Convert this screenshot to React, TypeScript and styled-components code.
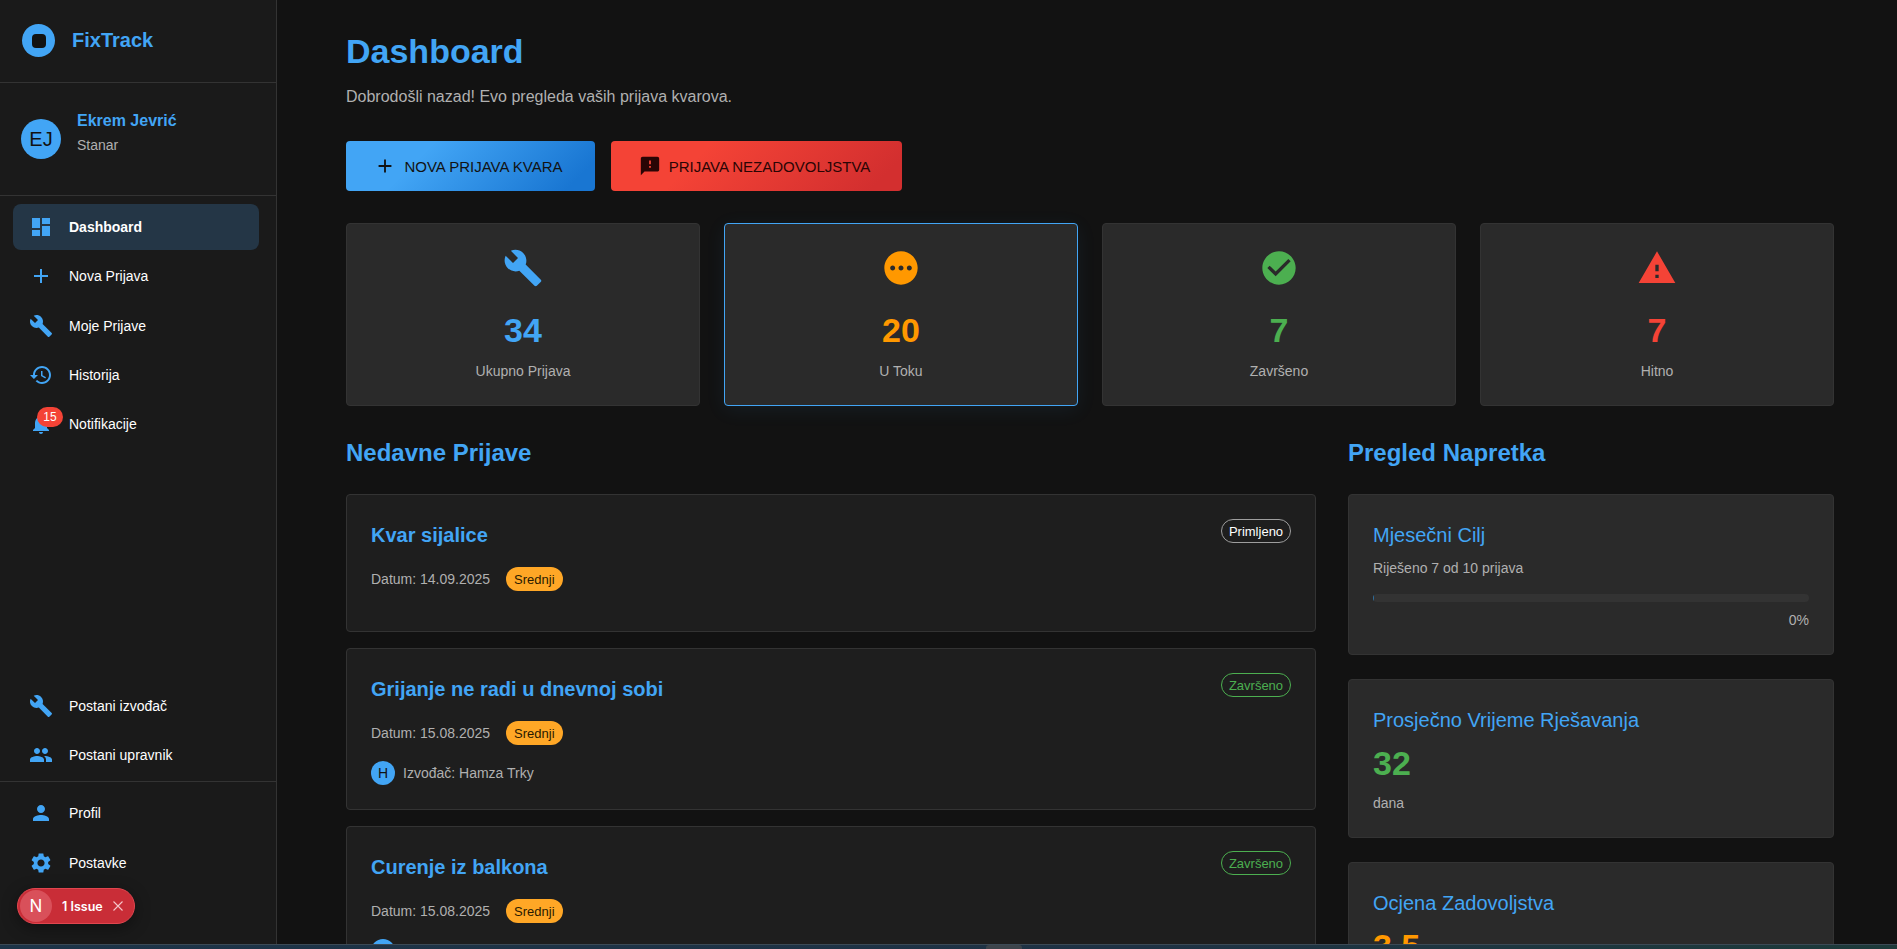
import React, { FC } from 'react';
import styled, { createGlobalStyle } from 'styled-components';

const GlobalStyle = createGlobalStyle`
    html, body {
        margin: 0;
        height: 100%;
        overflow: hidden;
        background: #121212;
        font-family: "Liberation Sans", Arial, sans-serif;
    }
    * {
        box-sizing: border-box;
    }
`;

const paths = {
    dashboard: 'M3 13h8V3H3v10zm0 8h8v-6H3v6zm10 0h8V11h-8v10zm0-18v6h8V3h-8z',
    add: 'M19 13h-6v6h-2v-6H5v-2h6V5h2v6h6v2z',
    build: 'M22.7 19l-9.1-9.1c.9-2.3.4-5-1.5-6.9-2-2-5-2.4-7.4-1.3L9 6 6 9 1.6 4.7C.4 7.1.9 10.1 2.9 12.1c1.9 1.9 4.6 2.4 6.9 1.5l9.1 9.1c.4.4 1 .4 1.4 0l2.3-2.3c.5-.4.5-1.1.1-1.4z',
    history: 'M13 3c-4.97 0-9 4.03-9 9H1l3.89 3.89.07.14L9 12H6c0-3.87 3.13-7 7-7s7 3.13 7 7-3.13 7-7 7c-1.93 0-3.68-.79-4.94-2.06l-1.42 1.42C8.27 19.99 10.51 21 13 21c4.97 0 9-4.03 9-9s-4.03-9-9-9zm-1 5v5l4.28 2.54.72-1.21-3.5-2.08V8H12z',
    bell: 'M12 22c1.1 0 2-.9 2-2h-4c0 1.1.89 2 2 2zm6-6v-5c0-3.07-1.64-5.64-4.5-6.32V4c0-.83-.67-1.5-1.5-1.5s-1.5.67-1.5 1.5v.68C7.63 5.36 6 7.92 6 11v5l-2 2v1h16v-1l-2-2z',
    people: 'M16 11c1.66 0 2.99-1.34 2.99-3S17.66 5 16 5c-1.66 0-3 1.34-3 3s1.34 3 3 3zm-8 0c1.66 0 2.99-1.34 2.99-3S9.66 5 8 5C6.34 5 5 6.34 5 8s1.34 3 3 3zm0 2c-2.33 0-7 1.17-7 3.5V19h14v-2.5c0-2.33-4.67-3.5-7-3.5zm8 0c-.29 0-.62.02-.97.05 1.16.84 1.97 1.97 1.97 3.45V19h6v-2.5c0-2.33-4.67-3.5-7-3.5z',
    person: 'M12 12c2.21 0 4-1.79 4-4s-1.79-4-4-4-4 1.79-4 4 1.79 4 4 4zm0 2c-2.67 0-8 1.34-8 4v2h16v-2c0-2.66-5.33-4-8-4z',
    settings: 'M19.14 12.94c.04-.3.06-.61.06-.94 0-.32-.02-.64-.07-.94l2.03-1.58c.18-.14.23-.41.12-.61l-1.92-3.32c-.12-.22-.37-.29-.59-.22l-2.39.96c-.5-.38-1.03-.7-1.62-.94l-.36-2.54c-.04-.24-.24-.41-.48-.41h-3.84c-.24 0-.43.17-.47.41l-.36 2.54c-.59.24-1.13.57-1.62.94l-2.39-.96c-.22-.08-.47 0-.59.22L2.74 8.87c-.12.21-.08.47.12.61l2.03 1.58c-.05.3-.09.63-.09.94s.02.64.07.94l-2.03 1.58c-.18.14-.23.41-.12.61l1.92 3.32c.12.22.37.29.59.22l2.39-.96c.5.38 1.03.7 1.62.94l.36 2.54c.05.24.24.41.48.41h3.84c.24 0 .44-.17.47-.41l.36-2.54c.59-.24 1.13-.56 1.62-.94l2.39.96c.22.08.47 0 .59-.22l1.92-3.32c.12-.22.07-.47-.12-.61l-2.01-1.58zM12 15.6c-1.98 0-3.6-1.62-3.6-3.6s1.62-3.6 3.6-3.6 3.6 1.62 3.6 3.6-1.62 3.6-3.6 3.6z',
    feedback: 'M20 2H4c-1.1 0-1.99.9-1.99 2L2 22l4-4h14c1.1 0 2-.9 2-2V4c0-1.1-.9-2-2-2zm-7 12h-2v-2h2v2zm0-4h-2V6h2v4z',
    pending: 'M12 2C6.48 2 2 6.48 2 12s4.48 10 10 10 10-4.48 10-10S17.52 2 12 2zM7 13.5c-.83 0-1.5-.67-1.5-1.5s.67-1.5 1.5-1.5 1.5.67 1.5 1.5-.67 1.5-1.5 1.5zm5 0c-.83 0-1.5-.67-1.5-1.5s.67-1.5 1.5-1.5 1.5.67 1.5 1.5-.67 1.5-1.5 1.5zm5 0c-.83 0-1.5-.67-1.5-1.5s.67-1.5 1.5-1.5 1.5.67 1.5 1.5-.67 1.5-1.5 1.5z',
    check: 'M12 2C6.48 2 2 6.48 2 12s4.48 10 10 10 10-4.48 10-10S17.52 2 12 2zm-2 15l-5-5 1.41-1.41L10 14.17l7.59-7.59L19 8l-9 9z',
    warning: 'M1 21h22L12 2 1 21zm12-3h-2v-2h2v2zm0-4h-2v-4h2v4z',
};

type IconName = keyof typeof paths;

const Svg = styled.svg<{ $size: number }>`
    width: ${(p) => p.$size}px;
    height: ${(p) => p.$size}px;
    fill: currentColor;
    flex-shrink: 0;
    display: block;
`;

const Icon: FC<{ name: IconName; size?: number }> = ({ name, size = 24 }) => (
    <Svg $size={size} viewBox="0 0 24 24">
        <path d={paths[name]} />
    </Svg>
);

const Page = styled.div`
    display: flex;
    flex-direction: column;
    height: 949px;
    overflow: hidden;
`;

const Shell = styled.div`
    display: flex;
    height: 944px;
    flex-shrink: 0;
    overflow: hidden;
`;

const Sidebar = styled.aside`
    position: relative;
    width: 277px;
    flex-shrink: 0;
    background: #1a1a1a;
    border-right: 1px solid #333;
    display: flex;
    flex-direction: column;
`;

const Brand = styled.div`
    height: 83px;
    flex-shrink: 0;
    display: flex;
    align-items: center;
    gap: 17px;
    padding: 0 0 1px 22px;
    border-bottom: 1px solid #333;
`;

const BrandMark = styled.div`
    width: 33px;
    height: 33px;
    border-radius: 50%;
    background: #42a5f5;
    display: flex;
    align-items: center;
    justify-content: center;
    &::after {
        content: '';
        width: 14px;
        height: 14px;
        border-radius: 4px;
        background: #121212;
    }
`;

const BrandName = styled.div`
    font-size: 20px;
    font-weight: 700;
    color: #42a5f5;
`;

const UserBox = styled.div`
    height: 113px;
    flex-shrink: 0;
    display: flex;
    align-items: center;
    gap: 16px;
    padding: 0 0 0 21px;
    border-bottom: 1px solid #333;
`;

const Avatar = styled.div`
    width: 40px;
    height: 40px;
    border-radius: 50%;
    background: #42a5f5;
    color: #121212;
    font-size: 20px;
    display: flex;
    align-items: center;
    justify-content: center;
`;

const UserText = styled.div`
    padding-bottom: 14px;
`;

const UserName = styled.div`
    font-size: 16px;
    font-weight: 700;
    color: #42a5f5;
    margin-bottom: 7px;
`;

const UserRole = styled.div`
    font-size: 14px;
    color: #b0b0b0;
`;

const Nav = styled.nav`
    padding: 8px 17px 8px 13px;
    display: flex;
    flex-direction: column;
`;

const BottomNav = styled(Nav)`
    margin-top: auto;
    padding-bottom: 0;
`;

const FooterNav = styled(Nav)`
    padding-bottom: 55px;
`;

const NavItem = styled.div<{ $active?: boolean }>`
    height: 46px;
    margin-bottom: 3.3px;
    display: flex;
    align-items: center;
    padding-left: 16px;
    border-radius: 8px;
    background: ${(p) => (p.$active ? '#243646' : 'transparent')};
    color: #42a5f5;
`;

const NavIconSlot = styled.div`
    position: relative;
    width: 40px;
    flex-shrink: 0;
`;

const NavLabel = styled.span<{ $active?: boolean }>`
    font-size: 14px;
    font-weight: ${(p) => (p.$active ? 700 : 400)};
    color: #fff;
`;

const NavBadge = styled.span`
    position: absolute;
    top: -5px;
    left: 8px;
    min-width: 26px;
    height: 20px;
    padding: 0 6px;
    border-radius: 10px;
    background: #f44336;
    color: #fff;
    font-size: 12px;
    display: flex;
    align-items: center;
    justify-content: center;
`;

const NavRule = styled.div`
    height: 1px;
    background: #333;
`;

const IssuePill = styled.div`
    position: absolute;
    left: 17px;
    bottom: 20px;
    width: 118px;
    height: 36px;
    border-radius: 18px;
    background: #c92d37;
    border: 1px solid #e0464f;
    box-shadow: 0 4px 16px rgba(0, 0, 0, 0.4);
    color: #fff;
    display: flex;
    align-items: center;
    padding-left: 2px;
    font-family: Inter, "Liberation Sans", sans-serif;
`;

const IssueLogo = styled.div`
    width: 32px;
    height: 32px;
    border-radius: 50%;
    background: #d9505a;
    font-size: 17px;
    display: flex;
    align-items: center;
    justify-content: center;
    margin-right: 10px;
`;

const IssueText = styled.span`
    font-size: 12.5px;
    font-weight: 600;
    margin-right: 9px;
    white-space: nowrap;
`;

const Main = styled.main`
    flex: 1;
    min-width: 0;
    background: #121212;
    padding: 32px 63px 0 69px;
    overflow: hidden;
`;

const Title = styled.h1`
    margin: 0;
    font-size: 34px;
    line-height: 38px;
    font-weight: 700;
    color: #42a5f5;
`;

const Subtitle = styled.p`
    margin: 16px 0 0;
    font-size: 16px;
    line-height: 22px;
    color: #b0b0b0;
`;

const Actions = styled.div`
    display: flex;
    gap: 16px;
    margin-top: 33px;
`;

const ActionButton = styled.div<{ $from: string; $to: string; $ink: string; $width: number }>`
    width: ${(p) => p.$width}px;
    height: 50px;
    display: flex;
    align-items: center;
    justify-content: center;
    gap: 8px;
    border-radius: 4px;
    font-size: 15px;
    text-transform: uppercase;
    color: ${(p) => p.$ink};
    background: linear-gradient(135deg, ${(p) => p.$from} 30%, ${(p) => p.$to} 90%);
    svg {
        margin-left: -4px;
    }
`;

const Stats = styled.div`
    display: grid;
    grid-template-columns: repeat(4, 1fr);
    gap: 24px;
    margin-top: 32px;
`;

const StatCard = styled.div<{ $active?: boolean }>`
    height: 183px;
    border-radius: 4px;
    background: #2a2a2a;
    border: 1px solid ${(p) => (p.$active ? '#42a5f5' : '#333')};
    box-shadow: ${(p) => (p.$active ? '0 4px 20px rgba(66, 165, 245, 0.08)' : 'none')};
    display: flex;
    flex-direction: column;
    align-items: center;
    padding-top: 24px;
`;

const StatIcon = styled.div<{ $color: string }>`
    color: ${(p) => p.$color};
`;

const StatValue = styled.div<{ $color: string }>`
    margin-top: 23px;
    font-size: 34px;
    line-height: 38px;
    font-weight: 700;
    color: ${(p) => p.$color};
`;

const StatLabel = styled.div`
    margin-top: 12px;
    font-size: 14px;
    line-height: 20px;
    color: #b0b0b0;
`;

const Columns = styled.div`
    display: grid;
    grid-template-columns: 970px 486px;
    gap: 32px;
    margin-top: 33px;
`;

const SectionTitle = styled.h2`
    margin: 0 0 27px;
    font-size: 24px;
    line-height: 28px;
    font-weight: 700;
    color: #42a5f5;
`;

const ReportCard = styled.div<{ $height: number }>`
    position: relative;
    height: ${(p) => p.$height}px;
    margin-bottom: 16px;
    padding: 24px;
    border-radius: 4px;
    background: #1e1e1e;
    border: 1px solid #333;
`;

const ReportTitle = styled.h3`
    margin: 2px 0 0;
    font-size: 20px;
    line-height: 28px;
    font-weight: 700;
    color: #42a5f5;
`;

const ReportMeta = styled.div`
    display: flex;
    align-items: center;
    gap: 16px;
    margin-top: 18px;
    font-size: 14px;
    color: #b0b0b0;
`;

const Priority = styled.span`
    height: 24px;
    padding: 0 8px;
    border-radius: 12px;
    background: #ffa726;
    color: #2a1a00;
    font-size: 13px;
    display: flex;
    align-items: center;
`;

const Status = styled.span<{ $color: string }>`
    position: absolute;
    top: 24px;
    right: 24px;
    height: 24px;
    width: 70px;
    border-radius: 12px;
    border: 1px solid ${(p) => p.$color};
    color: ${(p) => (p.$color === '#4caf50' ? p.$color : '#fff')};
    font-size: 13px;
    display: flex;
    align-items: center;
    justify-content: center;
`;

const Contractor = styled.div`
    display: flex;
    align-items: center;
    gap: 8px;
    margin-top: 16px;
    font-size: 14px;
    color: #b0b0b0;
`;

const ContractorAvatar = styled.div`
    width: 24px;
    height: 24px;
    border-radius: 50%;
    background: #42a5f5;
    color: #121212;
    font-size: 14px;
    display: flex;
    align-items: center;
    justify-content: center;
`;

const ProgressCard = styled.div<{ $height: number }>`
    height: ${(p) => p.$height}px;
    margin-bottom: 24px;
    padding: 24px;
    border-radius: 4px;
    background: #2a2a2a;
    border: 1px solid #333;
`;

const ProgressTitle = styled.h4`
    margin: 2px 0 0;
    font-size: 20px;
    line-height: 28px;
    font-weight: 400;
    color: #42a5f5;
`;

const ProgressNote = styled.div`
    margin-top: 9px;
    font-size: 14px;
    line-height: 20px;
    color: #b0b0b0;
`;

const Track = styled.div`
    height: 8px;
    margin-top: 16px;
    border-radius: 4px;
    background: #333;
    overflow: hidden;
`;

const Fill = styled.div`
    height: 100%;
    background: #2f6f9f;
`;

const Percent = styled.div`
    margin-top: 8px;
    text-align: right;
    font-size: 14px;
    line-height: 20px;
    color: #b0b0b0;
`;

const BigValue = styled.div<{ $color: string }>`
    margin-top: 8px;
    font-size: 34px;
    line-height: 42px;
    font-weight: 700;
    color: ${(p) => p.$color};
`;

const Taskbar = styled.div`
    position: relative;
    flex: 1;
    border-top: 1px solid #3c4a55;
    background: linear-gradient(90deg, #1d3448 0%, #1f3244 60%, #1d3a3a 100%);
`;

const TaskbarHandle = styled.div`
    position: absolute;
    top: 0;
    left: 986px;
    width: 36px;
    height: 4px;
    border-radius: 3px 3px 0 0;
    background: #3d444b;
`;

const topNav: { icon: IconName; label: string; active?: boolean; badge?: string }[] = [
    { icon: 'dashboard', label: 'Dashboard', active: true },
    { icon: 'add', label: 'Nova Prijava' },
    { icon: 'build', label: 'Moje Prijave' },
    { icon: 'history', label: 'Historija' },
    { icon: 'bell', label: 'Notifikacije', badge: '15' },
];

const stats: { icon: IconName; value: string; label: string; color: string; active?: boolean }[] = [
    { icon: 'build', value: '34', label: 'Ukupno Prijava', color: '#42a5f5' },
    { icon: 'pending', value: '20', label: 'U Toku', color: '#ff9800', active: true },
    { icon: 'check', value: '7', label: 'Završeno', color: '#4caf50' },
    { icon: 'warning', value: '7', label: 'Hitno', color: '#f44336' },
];

const reports = [
    { title: 'Kvar sijalice', date: '14.09.2025', status: 'Primljeno', color: '#9e9e9e', height: 138 },
    { title: 'Grijanje ne radi u dnevnoj sobi', date: '15.08.2025', status: 'Završeno', color: '#4caf50', contractor: 'Hamza Trky', height: 162 },
    { title: 'Curenje iz balkona', date: '15.08.2025', status: 'Završeno', color: '#4caf50', contractor: 'Hamza Trky', height: 162 },
];

const NavRow: FC<{ icon: IconName; label: string; active?: boolean; badge?: string }> = ({ icon, label, active, badge }) => (
    <NavItem $active={active}>
        <NavIconSlot>
            <Icon name={icon} />
            {badge && <NavBadge>{badge}</NavBadge>}
        </NavIconSlot>
        <NavLabel $active={active}>{label}</NavLabel>
    </NavItem>
);

export default function App() {
    return (
        <Page>
            <GlobalStyle />
            <Shell>
                <Sidebar>
                    <Brand>
                        <BrandMark />
                        <BrandName>FixTrack</BrandName>
                    </Brand>
                    <UserBox>
                        <Avatar>EJ</Avatar>
                        <UserText>
                            <UserName>Ekrem Jevrić</UserName>
                            <UserRole>Stanar</UserRole>
                        </UserText>
                    </UserBox>
                    <Nav>
                        {topNav.map((item) => (
                            <NavRow key={item.label} {...item} />
                        ))}
                    </Nav>
                    <BottomNav>
                        <NavRow icon="build" label="Postani izvođač" />
                        <NavRow icon="people" label="Postani upravnik" />
                    </BottomNav>
                    <NavRule />
                    <FooterNav>
                        <NavRow icon="person" label="Profil" />
                        <NavRow icon="settings" label="Postavke" />
                    </FooterNav>
                    <IssuePill>
                        <IssueLogo>N</IssueLogo>
                        <IssueText>1 Issue</IssueText>
                        <svg width="12" height="12" viewBox="0 0 12 12" fill="none" stroke="#f5c6ca" strokeWidth="1.1">
                            <path d="M1.5 1.5l9 9M10.5 1.5l-9 9" />
                        </svg>
                    </IssuePill>
                </Sidebar>
                <Main>
                    <Title>Dashboard</Title>
                    <Subtitle>Dobrodošli nazad! Evo pregleda vaših prijava kvarova.</Subtitle>
                    <Actions>
                        <ActionButton $from="#42a5f5" $to="#1976d2" $ink="#121212" $width={249}>
                            <Icon name="add" size={22} />
                            Nova prijava kvara
                        </ActionButton>
                        <ActionButton $from="#f44336" $to="#d32f2f" $ink="#2a0505" $width={291}>
                            <Icon name="feedback" size={22} />
                            Prijava nezadovoljstva
                        </ActionButton>
                    </Actions>
                    <Stats>
                        {stats.map((s) => (
                            <StatCard key={s.label} $active={s.active}>
                                <StatIcon $color={s.color}>
                                    <Icon name={s.icon} size={40} />
                                </StatIcon>
                                <StatValue $color={s.color}>{s.value}</StatValue>
                                <StatLabel>{s.label}</StatLabel>
                            </StatCard>
                        ))}
                    </Stats>
                    <Columns>
                        <div>
                            <SectionTitle>Nedavne Prijave</SectionTitle>
                            {reports.map((r) => (
                                <ReportCard key={r.title} $height={r.height}>
                                    <ReportTitle>{r.title}</ReportTitle>
                                    <Status $color={r.color}>{r.status}</Status>
                                    <ReportMeta>
                                        Datum: {r.date}
                                        <Priority>Srednji</Priority>
                                    </ReportMeta>
                                    {r.contractor && (
                                        <Contractor>
                                            <ContractorAvatar>H</ContractorAvatar>
                                            Izvođač: {r.contractor}
                                        </Contractor>
                                    )}
                                </ReportCard>
                            ))}
                        </div>
                        <div>
                            <SectionTitle>Pregled Napretka</SectionTitle>
                            <ProgressCard $height={161}>
                                <ProgressTitle>Mjesečni Cilj</ProgressTitle>
                                <ProgressNote>Riješeno 7 od 10 prijava</ProgressNote>
                                <Track>
                                    <Fill style={{ width: '0.25%' }} />
                                </Track>
                                <Percent>0%</Percent>
                            </ProgressCard>
                            <ProgressCard $height={159}>
                                <ProgressTitle>Prosječno Vrijeme Rješavanja</ProgressTitle>
                                <BigValue $color="#4caf50">32</BigValue>
                                <ProgressNote>dana</ProgressNote>
                            </ProgressCard>
                            <ProgressCard $height={159}>
                                <ProgressTitle>Ocjena Zadovoljstva</ProgressTitle>
                                <BigValue $color="#ff9800">3.5</BigValue>
                            </ProgressCard>
                        </div>
                    </Columns>
                </Main>
            </Shell>
            <Taskbar>
                <TaskbarHandle />
            </Taskbar>
        </Page>
    );
}
